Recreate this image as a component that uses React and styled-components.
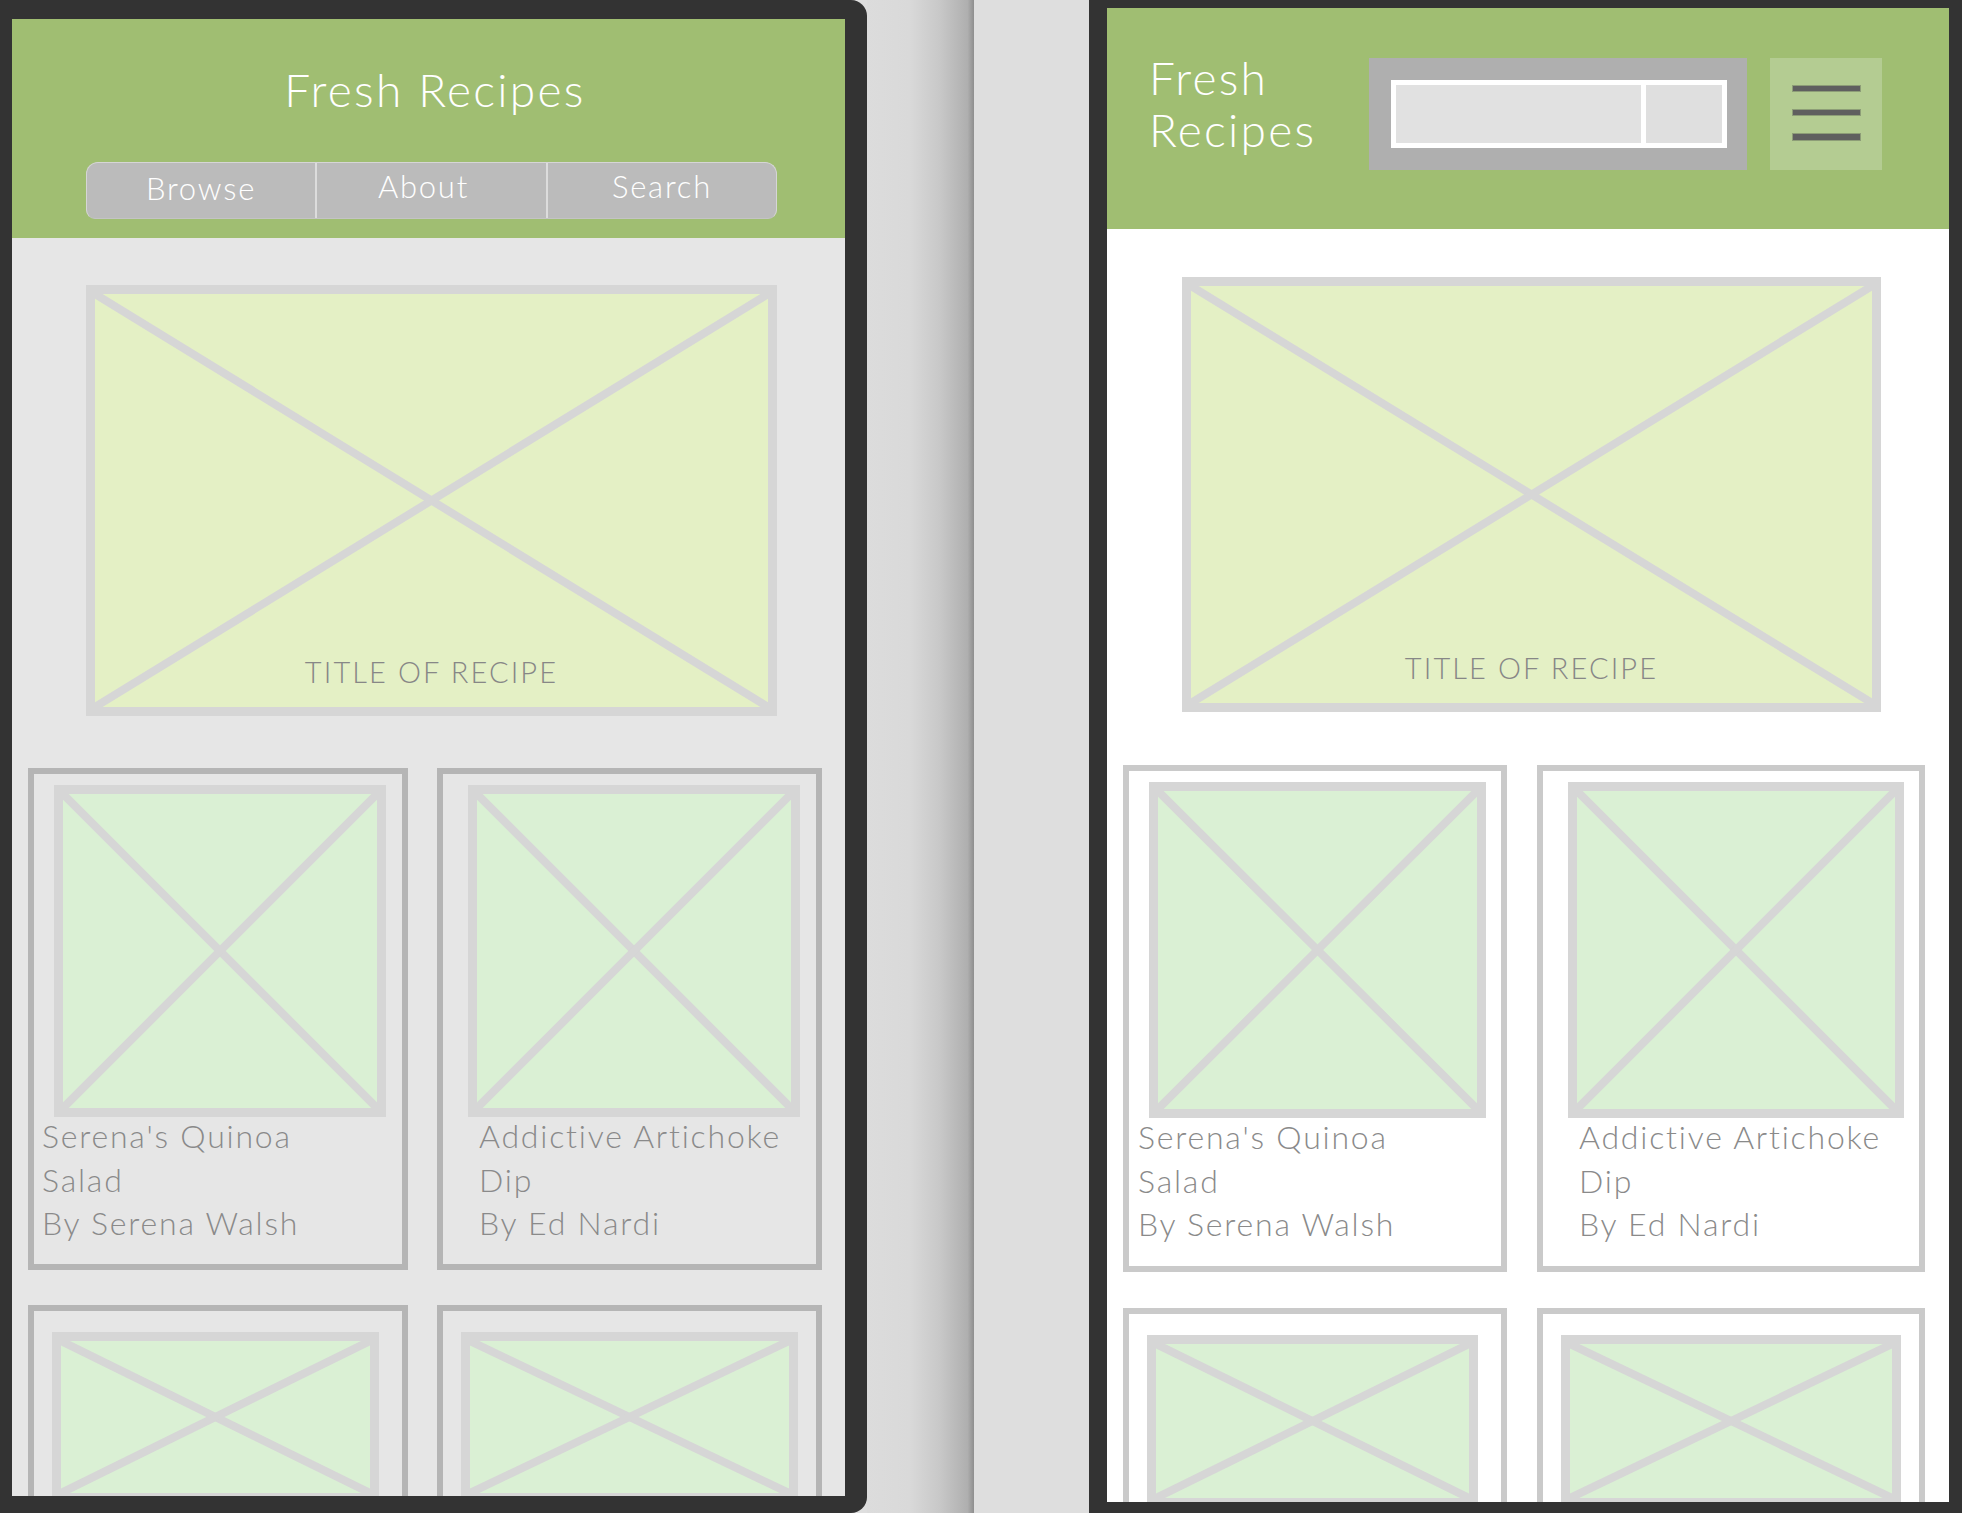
import React from 'react';
import styled, { createGlobalStyle } from 'styled-components';

const GlobalStyle = createGlobalStyle`
  html, body {
    margin: 0;
    padding: 0;
    background: #dedede;
  }
  body {
    overflow: hidden;
    font-family: Lato, 'Open Sans', sans-serif;
  }
  * {
    box-sizing: border-box;
  }
`;

const Stage = styled.div`
  display: flex;
  width: 1962px;
  height: 1513px;
  overflow: hidden;
  background: #dedede;
`;

const Device = styled.div`
  flex: none;
  display: flex;
  width: ${p => p.$width}px;
  height: 100%;
  padding: ${p => p.$pad};
  background: #333333;
  border-radius: ${p => p.$radius || '0'};
`;

const Fold = styled.div`
  flex: none;
  width: 107px;
  background: linear-gradient(to right, #dcdcdc 0%, #d9d9d9 40%, #c8c8c8 68%, #afafaf 94%, #8e8e8e 100%);
`;

const Desk = styled.div`
  flex: none;
  width: 115px;
  background: #dedede;
`;

const Screen = styled.div`
  flex: 1;
  display: flex;
  flex-direction: column;
  overflow: hidden;
  background: ${p => p.$bg};
`;

/* ---------- headers ---------- */

const StackedHeader = styled.header`
  flex: none;
  height: 219px;
  display: flex;
  flex-direction: column;
  align-items: center;
  padding-top: 48px;
  background: #a0be72;
`;

const InlineHeader = styled.header`
  flex: none;
  height: 221px;
  display: flex;
  align-items: flex-start;
  padding: 50px 67px 0 42px;
  background: #a0be72;
`;

const Brand = styled.h1`
  margin: ${p => p.$top || 0}px 0 0 ${p => p.$shift || 0}px;
  font-family: Lato, 'Open Sans', sans-serif;
  font-weight: 300;
  font-size: 46px;
  line-height: ${p => p.$lh}px;
  letter-spacing: 2.3px;
  color: #ffffff;
`;

const Tabs = styled.nav`
  display: grid;
  grid-template-columns: 228px 231px 1fr;
  width: 691px;
  height: 57px;
  margin: 50px 0 0 6px;
  background: #bbbbbb;
  border: 1px solid #d6d6d6;
  border-bottom-color: #c4c4c4;
  border-radius: 12px 12px 9px 9px;
  overflow: hidden;
`;

const Tab = styled.a`
  display: flex;
  align-items: center;
  justify-content: center;
  padding-bottom: ${p => (p.$low ? 6 : 10)}px;
  padding-right: ${p => p.$nudge || 0}px;
  border-left: ${p => (p.$first ? 'none' : '2px solid #dcdcdc')};
  font-family: Lato, 'Open Sans', sans-serif;
  font-weight: 300;
  font-size: 31px;
  letter-spacing: 1.8px;
  color: #ffffff;
  text-decoration: none;
`;

const SearchBox = styled.div`
  flex: none;
  width: 378px;
  height: 112px;
  margin-left: auto;
  padding: 22px 20px 22px 22px;
  background: #afafaf;
`;

const SearchField = styled.div`
  display: flex;
  gap: 5px;
  height: 100%;
  border: 5px solid #ffffff;
  background: #ffffff;
`;

const SearchInput = styled.div`
  flex: 1;
  background: #e1e1e1;
`;

const SearchButton = styled.div`
  flex: none;
  width: 76px;
  background: #dfdfdf;
`;

const MenuButton = styled.button`
  flex: none;
  display: flex;
  flex-direction: column;
  align-items: center;
  gap: 19px;
  width: 112px;
  height: 112px;
  margin-left: 23px;
  padding: 28px 0 0;
  border: none;
  background: #b4cc92;
`;

const MenuBar = styled.span`
  display: block;
  width: 67px;
  height: ${p => p.$h}px;
  background: #5f5f5f;
  box-shadow: 0 0 0 1px rgba(70, 70, 70, 0.35);
`;

/* ---------- feed ---------- */

const Feed = styled.main`
  display: flex;
  flex-direction: column;
  align-items: flex-start;
  padding: ${p => p.$top}px 0 0 16px;
`;

const Picture = styled.div`
  position: relative;
  flex: none;
  display: flex;
  flex-direction: column;
  justify-content: flex-end;
  align-items: center;
  width: ${p => p.$w}px;
  height: ${p => p.$h}px;
  margin-left: ${p => p.$left || 0}px;
  border: 9px solid #d6d6d6;
  background: ${p => p.$fill};
`;

const Cross = styled.svg`
  position: absolute;
  inset: 0;
  display: block;
  width: 100%;
  height: 100%;
`;

const Caption = styled.span`
  position: relative;
  padding-bottom: 20px;
  font-family: Lato, 'Open Sans', sans-serif;
  font-weight: 300;
  font-size: 29px;
  line-height: 30px;
  letter-spacing: 2.1px;
  color: #878787;
`;

const Grid = styled.div`
  display: grid;
  grid-template-columns: ${p => p.$cols};
  column-gap: ${p => p.$gap}px;
  row-gap: ${p => p.$rowGap}px;
  margin-top: ${p => p.$top}px;
`;

const Card = styled.article`
  display: flex;
  flex-direction: column;
  align-items: flex-start;
  padding: ${p => p.$top}px 0 ${p => p.$bottom}px;
  border: 6px solid ${p => p.$line};
`;

const CardText = styled.div`
  margin-top: -3px;
  padding-left: ${p => p.$inset}px;
  font-family: Lato, 'Open Sans', sans-serif;
  font-weight: 300;
  font-size: 32px;
  line-height: 43.5px;
  letter-spacing: 1.8px;
  color: #8a8a8a;
`;

const RecipeName = styled.div`
  max-width: 322px;
`;

const Placeholder = ({ w, h, fill, left, children }) => {
  const iw = w - 18;
  const ih = h - 18;
  return (
    <Picture $w={w} $h={h} $fill={fill} $left={left}>
      <Cross viewBox={`0 0 ${iw} ${ih}`} preserveAspectRatio="none">
        <line x1="0" y1="0" x2={iw} y2={ih} stroke="#d6d6d6" strokeWidth="8" />
        <line x1={iw} y1="0" x2="0" y2={ih} stroke="#d6d6d6" strokeWidth="8" />
      </Cross>
      {children}
    </Picture>
  );
};

const RecipeCard = ({ card, line, bottom }) => (
  <Card $top={card.top} $bottom={bottom} $line={line}>
    <Placeholder w={card.w} h={card.h} left={card.left} fill="#daf0d4" />
    {card.title && (
      <CardText $inset={card.inset}>
        <RecipeName>{card.title}</RecipeName>
        <div>{card.author}</div>
      </CardText>
    )}
  </Card>
);

const leftCards = [
  { title: "Serena's Quinoa Salad", author: 'By Serena Walsh', top: 11, left: 20, w: 332, h: 332, inset: 8 },
  { title: 'Addictive Artichoke Dip', author: 'By Ed Nardi', top: 11, left: 25, w: 332, h: 332, inset: 36 },
  { top: 21, left: 18, w: 327, h: 170 },
  { top: 21, left: 18, w: 337, h: 170 },
];

const rightCards = [
  { title: "Serena's Quinoa Salad", author: 'By Serena Walsh', top: 11, left: 20, w: 337, h: 336, inset: 9 },
  { title: 'Addictive Artichoke Dip', author: 'By Ed Nardi', top: 11, left: 25, w: 336, h: 336, inset: 36 },
  { top: 21, left: 18, w: 331, h: 172 },
  { top: 21, left: 18, w: 340, h: 172 },
];

export default function App() {
  return (
    <>
      <GlobalStyle />
      <Stage>
        <Device $width={867} $pad="19px 22px 17px 12px" $radius="0 16px 16px 0">
          <Screen $bg="#e6e6e6">
            <StackedHeader>
              <Brand $lh={45} $shift={13}>Fresh Recipes</Brand>
              <Tabs>
                <Tab href="#" $first $low>Browse</Tab>
                <Tab href="#" $nudge={16}>About</Tab>
                <Tab href="#">Search</Tab>
              </Tabs>
            </StackedHeader>
            <Feed $top={47}>
              <Placeholder w={691} h={431} left={58} fill="#e4f0c5">
                <Caption>TITLE OF RECIPE</Caption>
              </Placeholder>
              <Grid $cols="380px 385px" $gap={29} $rowGap={35} $top={52}>
                {leftCards.map((card, i) => (
                  <RecipeCard key={i} card={card} line="#b5b5b5" bottom={19} />
                ))}
              </Grid>
            </Feed>
          </Screen>
        </Device>
        <Fold />
        <Desk />
        <Device $width={873} $pad="8px 13px 11px 18px">
          <Screen $bg="#ffffff">
            <InlineHeader>
              <Brand $lh={52} $top={-6}>Fresh<br />Recipes</Brand>
              <SearchBox>
                <SearchField>
                  <SearchInput />
                  <SearchButton />
                </SearchField>
              </SearchBox>
              <MenuButton aria-label="Menu">
                <MenuBar $h={5} />
                <MenuBar $h={5} />
                <MenuBar $h={6} />
              </MenuButton>
            </InlineHeader>
            <Feed $top={48}>
              <Placeholder w={699} h={435} left={59} fill="#e4f0c5">
                <Caption>TITLE OF RECIPE</Caption>
              </Placeholder>
              <Grid $cols="384px 388px" $gap={30} $rowGap={36} $top={53}>
                {rightCards.map((card, i) => (
                  <RecipeCard key={i} card={card} line="#cacaca" bottom={20} />
                ))}
              </Grid>
            </Feed>
          </Screen>
        </Device>
      </Stage>
    </>
  );
}
